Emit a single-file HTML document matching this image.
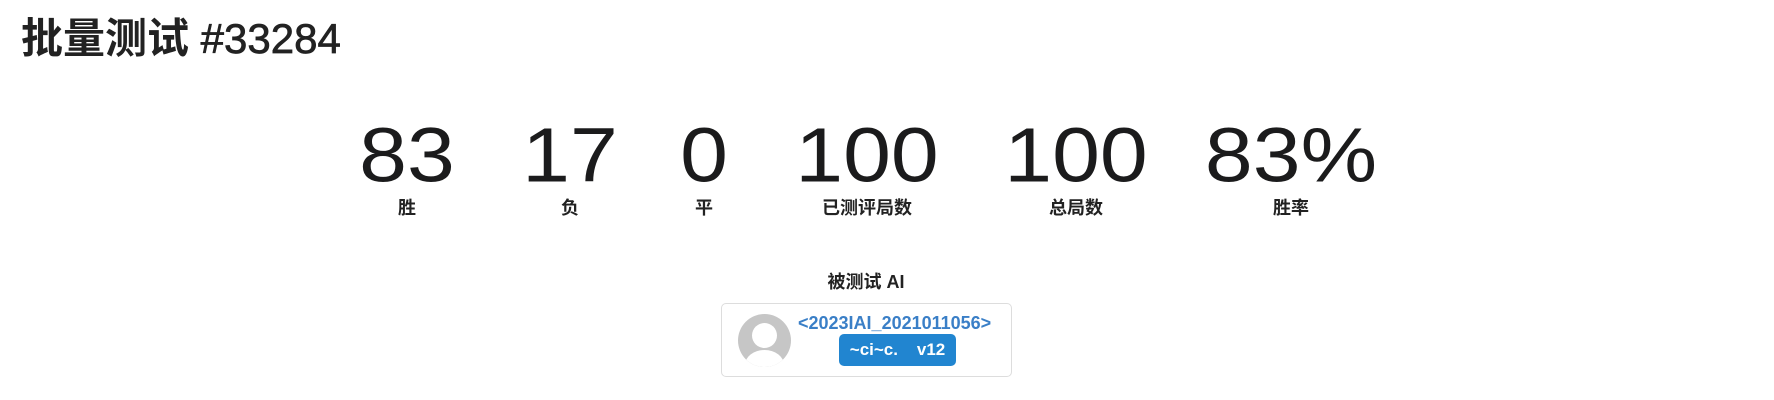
<!DOCTYPE html>
<html><head><meta charset="utf-8"><style>
body{margin:0;width:1774px;height:400px;background:#fff;position:relative;font-family:"Liberation Sans","Noto Sans CJK SC",sans-serif;color:#222;overflow:hidden}
h1{position:absolute;left:21px;top:14px;margin:0;font-size:42px;font-weight:bold;line-height:50px}
h1 span{font-weight:normal;-webkit-text-stroke:0.7px #222}
.n{position:absolute;top:114px;width:300px;margin-left:-150px;text-align:center}
.n b{display:block;font-size:86px;font-weight:normal;line-height:92px;color:#1b1b1c;transform:scaleY(0.89);transform-origin:50% 8px}
.n span{display:block;font-size:18px;font-weight:bold;line-height:24px;margin-top:-10px}
.t{position:absolute;left:716px;width:300px;top:268px;text-align:center;font-size:18px;font-weight:bold}
.card{position:absolute;left:721px;top:303px;width:291px;height:74px;border:1px solid #ddd;border-radius:5px;box-sizing:border-box}
.av{position:absolute;left:738px;top:314px;width:53px;height:53px;border-radius:50%;background:#c6c6c6;overflow:hidden}
.av i{position:absolute;left:14px;top:9px;width:25px;height:25px;border-radius:50%;background:#fff}
.av u{position:absolute;left:7px;top:36px;width:39px;height:30px;border-radius:50% 50% 0 0;background:#fff}
.lk{position:absolute;left:798px;top:313px;font-size:18px;font-weight:bold;color:#3a7fc7}
.bd{position:absolute;left:839px;top:334px;width:117px;height:32px;border-radius:5px;background:#2185d0;color:#fff;font-size:17px;font-weight:bold;line-height:32px;text-align:center;white-space:pre}
</style></head><body>
<h1>批量测试 <span>#33284</span></h1>
<div class="n" style="left:407px"><b>83</b><span>胜</span></div>
<div class="n" style="left:570px"><b>17</b><span>负</span></div>
<div class="n" style="left:704px"><b>0</b><span>平</span></div>
<div class="n" style="left:867px"><b>100</b><span>已测评局数</span></div>
<div class="n" style="left:1076px"><b>100</b><span>总局数</span></div>
<div class="n" style="left:1291px"><b>83%</b><span>胜率</span></div>
<div class="t">被测试 AI</div>
<div class="card"></div>
<div class="av"><i></i><u></u></div>
<div class="lk">&lt;2023IAI_2021011056&gt;</div>
<div class="bd">~ci~c.    v12</div>
</body></html>
